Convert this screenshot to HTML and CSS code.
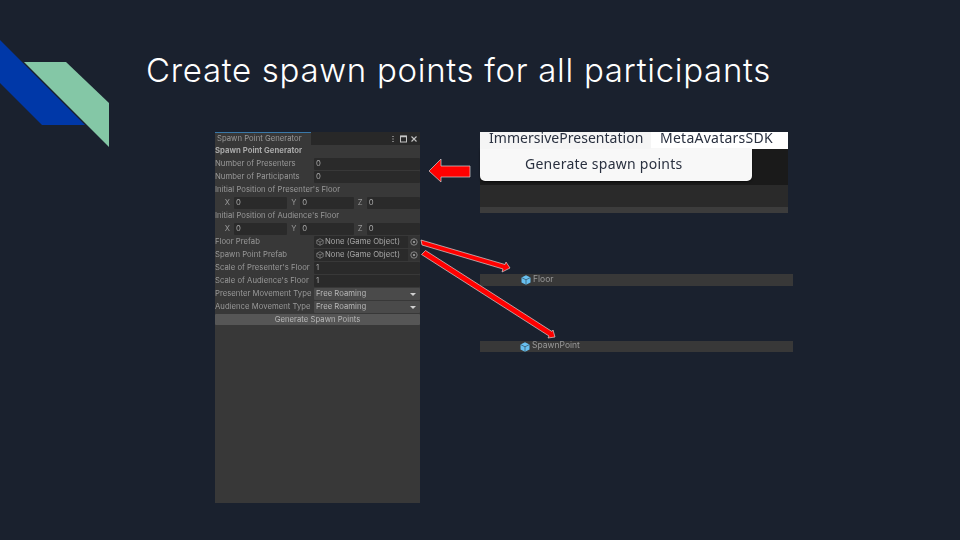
FILE: index.html
```html
<!DOCTYPE html>
<html lang="en">
<head>
<meta charset="utf-8">
<title>Create spawn points for all participants</title>
<link rel="stylesheet" href="styles.css">
</head>
<body>
<main class="slide">
  <svg class="deco" width="110" height="150" viewBox="0 0 110 150" aria-hidden="true">
    <polygon points="0,40 85,125 42,125 0,83" fill="#0038a8"/>
    <polygon points="24,62 66,62 109,103 109,147" fill="#84c7a6"/>
  </svg>
  <h1 class="title">Create spawn points for all participants</h1>

  <section class="inspector">
    <div class="tabbar">
      <div class="tab">Spawn Point Generator</div>
      <div class="winctl">
        <svg width="30" height="10" viewBox="0 0 30 10" aria-hidden="true">
          <path d="M3 2v1M3 4.5v1M3 7v1" stroke="#c4c4c4" stroke-width="1.1" fill="none"/>
          <rect x="10.5" y="2" width="6" height="6" stroke="#c4c4c4" fill="none"/>
          <path d="M10.5 2.5h6" stroke="#c4c4c4" stroke-width="1.5"/>
          <path d="M21.5 2.5l5 5M26.5 2.5l-5 5" stroke="#c4c4c4" stroke-width="1.1"/>
        </svg>
      </div>
    </div>
    <div class="fields">
      <div class="row heading">Spawn Point Generator</div>
      <div class="row"><span class="lbl">Number of Presenters</span><span class="input">0</span></div>
      <div class="row"><span class="lbl">Number of Participants</span><span class="input">0</span></div>
      <div class="row">Initial Position of Presenter's Floor</div>
      <div class="row xyz">
        <span class="axis">X</span><span class="input">0</span>
        <span class="axis">Y</span><span class="input">0</span>
        <span class="axis">Z</span><span class="input">0</span>
      </div>
      <div class="row">Initial Position of Audience's Floor</div>
      <div class="row xyz">
        <span class="axis">X</span><span class="input">0</span>
        <span class="axis">Y</span><span class="input">0</span>
        <span class="axis">Z</span><span class="input">0</span>
      </div>
      <div class="row"><span class="lbl">Floor Prefab</span>
        <span class="input object">
          <svg class="cube" width="8" height="8" viewBox="0 0 8 8" aria-hidden="true"><path d="M4 .7L7.2 2.3V5.7L4 7.3.8 5.7V2.3ZM.8 2.3L4 4 7.2 2.3M4 4V7.3" fill="none" stroke="#9c9c9c" stroke-width=".6"/></svg>
          <span class="objname">None (Game Object)</span>
          <span class="picker"><svg width="8" height="8" viewBox="0 0 8 8" aria-hidden="true"><circle cx="4" cy="4" r="3.2" fill="none" stroke="#a8a8a8" stroke-width=".7"/><circle cx="4" cy="4" r="1.1" fill="#a8a8a8"/></svg></span>
        </span>
      </div>
      <div class="row"><span class="lbl">Spawn Point Prefab</span>
        <span class="input object">
          <svg class="cube" width="8" height="8" viewBox="0 0 8 8" aria-hidden="true"><path d="M4 .7L7.2 2.3V5.7L4 7.3.8 5.7V2.3ZM.8 2.3L4 4 7.2 2.3M4 4V7.3" fill="none" stroke="#9c9c9c" stroke-width=".6"/></svg>
          <span class="objname">None (Game Object)</span>
          <span class="picker"><svg width="8" height="8" viewBox="0 0 8 8" aria-hidden="true"><circle cx="4" cy="4" r="3.2" fill="none" stroke="#a8a8a8" stroke-width=".7"/><circle cx="4" cy="4" r="1.1" fill="#a8a8a8"/></svg></span>
        </span>
      </div>
      <div class="row"><span class="lbl">Scale of Presenter's Floor</span><span class="input">1</span></div>
      <div class="row"><span class="lbl">Scale of Audience's Floor</span><span class="input">1</span></div>
      <div class="row"><span class="lbl">Presenter Movement Type</span><span class="input select">Free Roaming<i class="caret"></i></span></div>
      <div class="row"><span class="lbl">Audience Movement Type</span><span class="input select">Free Roaming<i class="caret"></i></span></div>
      <div class="generate">Generate Spawn Points</div>
    </div>
  </section>

  <section class="menushot">
    <div class="menubar">
      <span class="menuitem active">ImmersivePresentation</span>
      <span class="menuitem">MetaAvatarsSDK</span>
    </div>
    <div class="dropband">
      <div class="dropdown">Generate spawn points</div>
    </div>
    <div class="midband"></div>
    <div class="lowband"></div>
  </section>

  <div class="hier floor">
    <svg class="bluecube" width="10" height="10" viewBox="0 0 10 10" aria-hidden="true"><path d="M5 .3L9.5 2.5V7.5L5 9.7.5 7.5V2.5Z" fill="#68c0f0"/><path d="M.5 2.5L5 4.8 9.5 2.5M5 4.8V9.7" fill="none" stroke="#2c3a44" stroke-width=".6"/></svg>
    <span>Floor</span>
  </div>
  <div class="hier spawn">
    <svg class="bluecube" width="10" height="10" viewBox="0 0 10 10" aria-hidden="true"><path d="M5 .3L9.5 2.5V7.5L5 9.7.5 7.5V2.5Z" fill="#68c0f0"/><path d="M.5 2.5L5 4.8 9.5 2.5M5 4.8V9.7" fill="none" stroke="#2c3a44" stroke-width=".6"/></svg>
    <span>SpawnPoint</span>
  </div>

  <svg class="arrows" width="960" height="540" viewBox="0 0 960 540" aria-hidden="true">
    <g fill="#f00" stroke="#d4d4d4" stroke-width=".7" stroke-linejoin="miter">
      <polygon points="470,166 441,166 441,159 429,171 441,182 441,177 470,177"/>
      <polygon points="421,240 505,264.5 506,262 510,268 502,272 503,269 422,245"/>
      <polygon points="425.5,250.5 552,331.5 553,330 555,337 548,338 549,336 421.5,254.5"/>
    </g>
  </svg>
</main>
</body>
</html>
```
FILE: styles.css
```css
* { box-sizing: border-box; }
html, body { margin: 0; padding: 0; }
body { width: 960px; height: 540px; overflow: hidden; background: #1a212e; }
.slide {
  position: relative;
  width: 960px;
  height: 540px;
  background: #1a212e;
  font-family: "Liberation Sans", Arial, sans-serif;
}
.deco { position: absolute; left: 0; top: 0; }
.title {
  position: absolute;
  left: 146px;
  top: 50px;
  margin: 0;
  font-family: Inter, "Noto Sans", sans-serif;
  font-weight: 300;
  font-size: 33px;
  line-height: 40px;
  letter-spacing: .7px;
  color: #fff;
  white-space: nowrap;
}

.inspector {
  position: absolute;
  left: 215px;
  top: 132px;
  width: 205px;
  height: 371px;
  background: #383838;
  font-family: Inter, "Liberation Sans", sans-serif;
  font-size: 7.7px;
  letter-spacing: .03px;
  color: #999;
  filter: blur(.35px);
}
.tabbar {
  display: flex;
  height: 13px;
  background: #282828;
  justify-content: space-between;
  align-items: center;
}
.tab {
  width: 96px;
  height: 13px;
  line-height: 12px;
  padding-left: 2px;
  background: #383838;
  border-top: 1px solid #3a78a8;
  white-space: nowrap;
}
.winctl { display: flex; align-items: center; height: 13px; }
.fields { display: flex; flex-direction: column; margin-top: -1px; }
.row {
  display: flex;
  align-items: center;
  height: 13px;
  line-height: 13px;
  white-space: nowrap;
  flex: none;
}
.heading { font-weight: 700; color: #a8a8a8; }
.lbl { width: 99px; flex: none; overflow: visible; }
.input {
  flex: 1;
  height: 12px;
  line-height: 12px;
  padding-left: 2px;
  background: #2a2a2a;
  border-radius: 1px;
  color: #a8a8a8;
  display: flex;
  align-items: center;
  min-width: 0;
}
.xyz { padding-left: 6px; }
.axis { width: 13px; flex: none; text-align: center; }
.xyz .input { flex: 1; }
.object { padding-left: 2px; gap: 1px; }
.objname { flex: 1; }
.picker {
  width: 12px;
  height: 12px;
  display: flex;
  align-items: center;
  justify-content: center;
  background: #333;
}
.select { background: #4a4a4a; position: relative; color: #b8b8b8; }
.caret {
  position: absolute;
  right: 4px;
  top: 5px;
  width: 0;
  height: 0;
  border-left: 3px solid transparent;
  border-right: 3px solid transparent;
  border-top: 3px solid #d0d0d0;
}
.generate {
  height: 11px;
  line-height: 11px;
  margin-top: 1px;
  text-align: center;
  background: #565656;
  border-radius: 1px;
  color: #b8b8b8;
}

.menushot {
  position: absolute;
  left: 480px;
  top: 132px;
  width: 308px;
  font-family: "Noto Sans", "Open Sans", sans-serif;
  filter: blur(.25px);
}
.menubar {
  display: flex;
  height: 17px;
  background: #fff;
  font-size: 14px;
  letter-spacing: .25px;
  line-height: 11px;
  color: #2a3140;
  white-space: nowrap;
}
.menuitem { padding: 0 9px; height: 17px; }
.menuitem.active { background: #f5f5f5; width: 171px; letter-spacing: .03px; }
.dropband { height: 36px; background: #1a1a1a; }
.dropdown {
  width: 272px;
  height: 32px;
  padding-left: 45px;
  line-height: 30px;
  background: #f8f8f8;
  border-radius: 0 0 5px 5px;
  box-shadow: 0 1px 2px rgba(0,0,0,.6);
  font-size: 14px;
  letter-spacing: .25px;
  color: #2a3140;
  white-space: nowrap;
}
.midband { height: 22px; background: #2a2a2a; }
.lowband { height: 6px; background: #3c3c3c; }

.hier {
  position: absolute;
  left: 480px;
  width: 313px;
  height: 12px;
  display: flex;
  align-items: center;
  gap: 2px;
  background: #383838;
  font-family: Inter, "Liberation Sans", sans-serif;
  font-size: 8.5px;
  line-height: 10px;
  color: #999;
  filter: blur(.25px);
}
.hier span { margin-top: -2px; }
.floor { top: 274px; padding-left: 41px; }
.spawn { top: 341px; height: 11px; padding-left: 40px; }
.spawn span { margin-top: -3px; }
.arrows { position: absolute; left: 0; top: 0; pointer-events: none; }
```
